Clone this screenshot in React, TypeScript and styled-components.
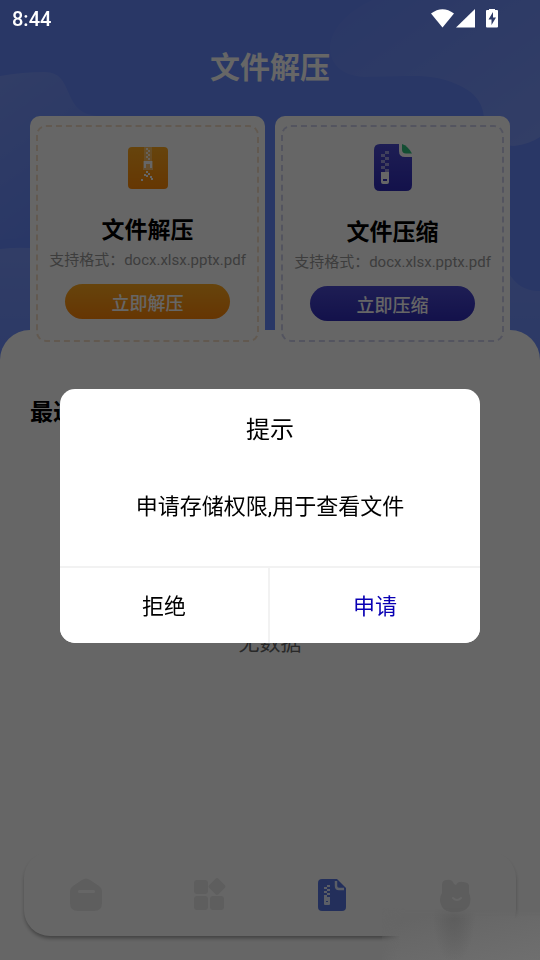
import React from 'react';
import styled, { createGlobalStyle } from 'styled-components';

const GlobalStyle = createGlobalStyle`
  * { box-sizing: border-box; }
  html, body, #root { margin: 0; padding: 0; }
  body {
    background: #fff;
    color: #000;
    font-family: Roboto, "Noto Sans CJK SC", sans-serif;
  }
  button { font: inherit; border: 0; margin: 0; padding: 0; cursor: pointer; }
  h1, h2, h3, p { margin: 0; }
`;

const Screen = styled.div`
  min-height: 100vh;
  display: flex;
  flex-direction: column;
  position: relative;
  background: #6689ff;
`;

const WaveArt = styled.svg`
  position: absolute;
  top: 0;
  left: 0;
  width: 100%;
  height: 380px;
`;

const StatusBar = styled.div`
  position: fixed;
  z-index: 30;
  top: 0;
  left: 0;
  right: 0;
  height: 38px;
  padding: 0 41px 0 12px;
  display: flex;
  align-items: center;
  justify-content: space-between;
  color: #fff;
  font-size: 20px;
  font-weight: 500;
`;

const StatusIcons = styled.svg`
  display: block;
`;

const Header = styled.header`
  position: relative;
  padding: 38px 0 18px;
`;

const PageTitle = styled.h1`
  color: #fff;
  font-size: 30px;
  line-height: 60px;
  font-weight: 700;
  text-align: center;
`;

const Cards = styled.section`
  position: relative;
  z-index: 1;
  margin: 0 30px;
  display: grid;
  grid-template-columns: 1fr 1fr;
  gap: 10px;
`;

const Card = styled.article`
  display: flex;
  padding: 9px 6px;
  border-radius: 10px;
  background: #fff;
`;

const CardFrame = styled.div<{ $line: string; $top: number }>`
  flex: 1;
  display: flex;
  flex-direction: column;
  align-items: center;
  padding: ${(p) => p.$top}px 0 19px;
  border: 2px dashed ${(p) => p.$line};
  border-radius: 10px;
`;

const CardTitle = styled.h2`
  margin-top: 27px;
  font-size: 23px;
  line-height: 30px;
  font-weight: 700;
`;

const CardNote = styled.p`
  margin-top: 4px;
  color: #999;
  font-size: 15px;
  line-height: 20px;
  white-space: nowrap;
`;

const PillButton = styled.button<{ $from: string; $to: string }>`
  width: 165px;
  height: 35px;
  && { margin-top: 14px; }
  border-radius: 18px;
  background: linear-gradient(${(p) => p.$from}, ${(p) => p.$to});
  color: #fff;
  && { font-size: 18px; font-weight: 500; }
`;

const Sheet = styled.main`
  flex: 1;
  margin-top: -21px;
  padding: 68px 30px 120px;
  position: relative;
  border-radius: 30px 30px 0 0;
  background: #fff;
`;

const SectionTitle = styled.h2`
  font-size: 23px;
  line-height: 30px;
  font-weight: 700;
`;

const Empty = styled.p`
  margin-top: 200px;
  color: #666;
  font-size: 21px;
  line-height: 30px;
  text-align: center;
`;

const TabBar = styled.nav`
  position: fixed;
  z-index: 5;
  left: 24px;
  right: 24px;
  bottom: 24px;
  height: 84px;
  padding-top: 2px;
  display: grid;
  grid-template-columns: repeat(4, 1fr);
  border-radius: 26px;
  background: #fff;
  box-shadow: 0 3px 4px -1px rgba(0, 0, 0, 0.4);
`;

const Tab = styled.button`
  display: flex;
  align-items: center;
  justify-content: center;
  background: transparent;
`;

const SoftPatch = styled.div`
  position: fixed;
  z-index: 25;
  right: 0;
  bottom: 0;
  width: 158px;
  height: 52px;
  background:
    radial-gradient(ellipse 22px 56px at 72px 0, rgba(90, 90, 90, 0.9), rgba(96, 96, 96, 0)),
    linear-gradient(165deg, #656565 20%, #6f6f6f);
  mask-image: linear-gradient(100deg, transparent, #000 14%), linear-gradient(transparent, #000 20%);
  mask-composite: intersect;
  pointer-events: none;
`;

const Scrim = styled.div`
  position: fixed;
  z-index: 20;
  inset: 0;
  padding: 72px 60px 0;
  display: flex;
  align-items: center;
  background: rgba(0, 0, 0, 0.6);
`;

const Dialog = styled.div`
  width: 100%;
  overflow: hidden;
  border-radius: 15px;
  background: #fff;
  text-align: center;
`;

const DialogTitle = styled.h3`
  padding-top: 21px;
  font-size: 24px;
  line-height: 40px;
  font-weight: 400;
`;

const DialogText = styled.p`
  padding: 40px 20px 43px;
  font-size: 22px;
  line-height: 33px;
`;

const DialogActions = styled.div`
  display: grid;
  grid-template-columns: 1fr 1fr;
  border-top: 2px solid #f2f2f2;
`;

const DialogButton = styled.button<{ $primary?: boolean }>`
  height: 75px;
  background: #fff;
  color: ${(p) => (p.$primary ? '#0a00b4' : '#000')};
  && {
    padding-bottom: 4px;
    font-size: 22px;
    border-right: ${(p) => (p.$primary ? '0' : '2px solid #f2f2f2')};
  }
`;

const Waves = () => (
  <WaveArt viewBox="0 0 540 380" preserveAspectRatio="none" aria-hidden="true">
    <defs>
      <linearGradient id="waveLeft" x1="0" y1="0" x2="0.5" y2="1">
        <stop offset="0" stopColor="#fff" stopOpacity="0.14" />
        <stop offset="1" stopColor="#fff" stopOpacity="0" />
      </linearGradient>
      <linearGradient id="waveRight" x1="0" y1="0" x2="1" y2="1">
        <stop offset="0" stopColor="#fff" stopOpacity="0.02" />
        <stop offset="1" stopColor="#fff" stopOpacity="0.16" />
      </linearGradient>
      <linearGradient id="waveLow" x1="0" y1="0" x2="0" y2="1">
        <stop offset="0" stopColor="#fff" stopOpacity="0.14" />
        <stop offset="1" stopColor="#fff" stopOpacity="0.03" />
      </linearGradient>
    </defs>
    <path d="M0 76Q22 72 44 72C74 71 62 110 92 115C140 120 120 200 60 226Q30 240 0 240Z" fill="url(#waveLeft)" />
    <path d="M372 0C350 10 330 28 330 48C330 64 342 76 364 77C400 77 430 72 456 84C476 92 483 104 484 118C488 140 505 146 514 146Q530 144 540 137V0Z" fill="url(#waveRight)" />
    <path d="M0 249Q16 247 30 248Q60 250 80 300V380H0Z" fill="url(#waveLow)" />
    <path d="M500 250Q510 292 540 291V380H500Z" fill="url(#waveLow)" />
  </WaveArt>
);

const ExtractIcon = () => (
  <svg width="40" height="42" viewBox="0 0 40 42" aria-hidden="true">
    <defs>
      <linearGradient id="extractFill" x1="0" y1="0" x2="0" y2="1">
        <stop offset="0" stopColor="#ffaa20" />
        <stop offset="1" stopColor="#ff8a08" />
      </linearGradient>
    </defs>
    <rect width="40" height="42" rx="4" fill="url(#extractFill)" />
    <rect x="16" width="8" height="14" fill="#fff" opacity="0.3" />
    <path fill="#fff" opacity="0.8" d="M18 1h2v2h-2zM20 3h2v2h-2zM18 5h2v2h-2zM20 7h2v2h-2zM18 9h2v2h-2zM20 11h2v2h-2z" />
    <path fill="#fff" opacity="0.4" d="M15 14H25V23H15Z" />
    <path fill="#fff" d="M16 14h8v7h-2v-4h-4v4h-2z" />
    <path fill="#fff" d="M18 24h2v2h-2zM16 27h2v2h-2zM20 26h2v2h-2zM18 28h2v2h-2zM13 32h2v2h-2zM22 29h2v2h-2zM23 31h2v2h-2z" />
  </svg>
);

const CompressIcon = () => (
  <svg width="38" height="47" viewBox="0 0 38 47" aria-hidden="true">
    <defs>
      <linearGradient id="compressFill" x1="0" y1="0" x2="0" y2="1">
        <stop offset="0" stopColor="#4c4cd2" />
        <stop offset="1" stopColor="#302cba" />
      </linearGradient>
    </defs>
    <path d="M6 0H25V7Q25 13 31 13H38V41Q38 47 32 47H6Q0 47 0 41V6Q0 0 6 0Z" fill="url(#compressFill)" />
    <path d="M28 0Q34 2 38 9.500H32Q28 9.500 28 5.500Z" fill="#31c480" />
    <path fill="#fff" opacity="0.5" d="M11 7h4v3h-4zM7 10h4v3H7zM11 13h4v3h-4zM7 16h4v3H7zM11 19h4v3h-4zM7 22h4v3H7zM11 25h4v3h-4z" />
    <path fill="#fff" fillRule="evenodd" d="M7 28H15V38Q15 40 13 40H9Q7 40 7 38ZM9 35V37H13V35Z" />
  </svg>
);

const HomeIcon = () => (
  <svg width="34" height="34" viewBox="0 0 34 34" aria-hidden="true">
    <path d="M13 2Q17 -1 21 2L30 8Q33 10 33 14V25Q33 33 25 33H9Q1 33 1 25V14Q1 10 4 8Z" fill="#ebebeb" />
    <rect x="9" y="12" width="17" height="3" rx="1.5" fill="#fff" />
  </svg>
);

const GridIcon = () => (
  <svg width="34" height="34" viewBox="0 0 34 34" fill="#ebebeb" aria-hidden="true">
    <rect x="2" y="2" width="14" height="14" rx="3" />
    <rect x="2" y="18" width="14" height="14" rx="3" />
    <rect x="18" y="18" width="14" height="14" rx="3" />
    <rect x="18.5" y="2" width="13" height="13" rx="2" transform="rotate(45 25 8.5)" />
  </svg>
);

const FileIcon = () => (
  <svg width="28" height="32" viewBox="0 0 28 32" aria-hidden="true">
    <path d="M4 0H19L28 9V28Q28 32 24 32H4Q0 32 0 28V4Q0 0 4 0Z" fill="#5877e4" />
    <path d="M18 2V7Q18 10 21 10H26" fill="none" stroke="#e4eaff" strokeWidth="2.4" />
    <path fill="#e4eaff" d="M9 6h3v2H9zM6 8h3v2H6zM9 10h3v2H9zM6 12h3v2H6zM9 14h3v2H9zM6 16h3v2H6z" />
    <path fill="#e4eaff" fillRule="evenodd" d="M6 18H12V25Q12 26 11 26H7Q6 26 6 25ZM8 22V23H10V22Z" />
  </svg>
);

const BearIcon = () => (
  <svg width="34" height="36" viewBox="0 0 34 36" aria-hidden="true">
    <path d="M4 8Q4 3 9 3Q14 2 16 7L18 8Q20 4 25 5Q32 5 31 11V16Q34 22 31 29Q26 36 17 35Q8 36 4 30Q0 22 4 16Z" fill="#e8e8e8" />
    <path d="M15 21Q19 25 23 21" fill="none" stroke="#fff" strokeWidth="2" strokeLinecap="round" />
  </svg>
);

export default function App() {
  return (
    <>
      <GlobalStyle />
      <StatusBar>
        <span>8:44</span>
        <StatusIcons width="68" height="20" viewBox="0 0 68 20" fill="#fff" aria-hidden="true">
          <path d="M0 4.5Q11.500 -4 23 4.500L11.500 18.500Z" />
          <path d="M44 0V18.500H25Z" />
          <path fillRule="evenodd" d="M58 -1H64V1H66Q67 1 67 2V17.500Q67 18.500 66 18.500H56Q55 18.500 55 17.500V2Q55 1 56 1H58ZM62 3L57.500 10.500H60.500V16L65 8.500H62Z" />
        </StatusIcons>
      </StatusBar>
      <Screen>
        <Waves />
        <Header>
          <PageTitle>文件解压</PageTitle>
        </Header>
        <Cards>
          <Card>
            <CardFrame $line="#f5dfc8" $top={20}>
              <ExtractIcon />
              <CardTitle>文件解压</CardTitle>
              <CardNote>支持格式：docx.xlsx.pptx.pdf</CardNote>
              <PillButton $from="#ffaa20" $to="#ff8608">立即解压</PillButton>
            </CardFrame>
          </Card>
          <Card>
            <CardFrame $line="#d0d2ee" $top={17}>
              <CompressIcon />
              <CardTitle>文件压缩</CardTitle>
              <CardNote>支持格式：docx.xlsx.pptx.pdf</CardNote>
              <PillButton $from="#4c4cd2" $to="#302cba">立即压缩</PillButton>
            </CardFrame>
          </Card>
        </Cards>
        <Sheet>
          <SectionTitle>最近文件</SectionTitle>
          <Empty>无数据</Empty>
        </Sheet>
        <TabBar>
          <Tab aria-label="首页"><HomeIcon /></Tab>
          <Tab aria-label="工具"><GridIcon /></Tab>
          <Tab aria-label="文件"><FileIcon /></Tab>
          <Tab aria-label="我的"><BearIcon /></Tab>
        </TabBar>
      </Screen>
      <Scrim>
        <Dialog role="dialog" aria-modal="true" aria-labelledby="dialog-title">
          <DialogTitle id="dialog-title">提示</DialogTitle>
          <DialogText>申请存储权限,用于查看文件</DialogText>
          <DialogActions>
            <DialogButton>拒绝</DialogButton>
            <DialogButton $primary>申请</DialogButton>
          </DialogActions>
        </Dialog>
      </Scrim>
      <SoftPatch />
    </>
  );
}
